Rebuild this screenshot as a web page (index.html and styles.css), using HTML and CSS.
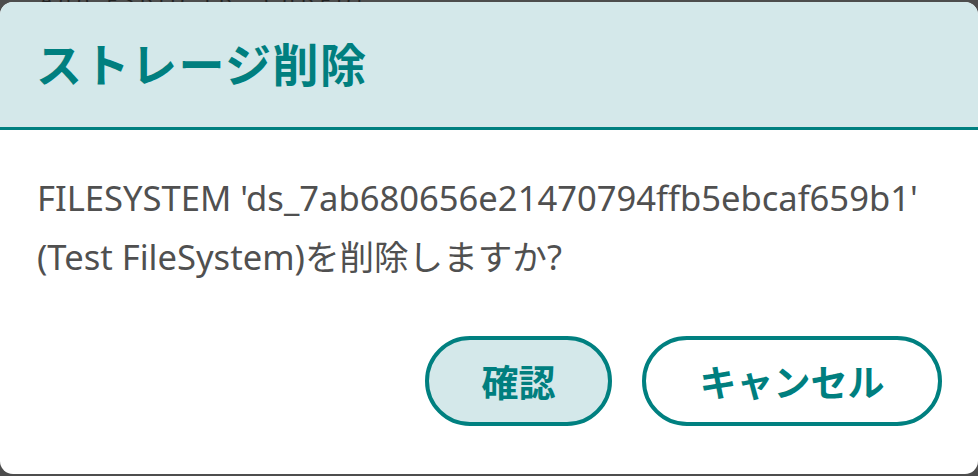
FILE: index.html
```html
<!DOCTYPE html>
<html lang="ja">
<head>
<meta charset="utf-8">
<link rel="stylesheet" href="styles.css">
</head>
<body>
<div class="backdrop-text">Ado FSBiD TB_ CdBFDi</div>
<div class="dialog">
  <div class="dialog-header">
    <h1 class="dialog-title">ストレージ削除</h1>
  </div>
  <div class="dialog-body">
    <p class="dialog-message">FILESYSTEM 'ds_7ab680656e21470794ffb5ebcaf659b1' (Test FileSystem)を削除しますか?</p>
  </div>
  <div class="dialog-actions">
    <button class="btn btn-primary">確認</button>
    <button class="btn btn-secondary">キャンセル</button>
  </div>
</div>
</body>
</html>
```
FILE: styles.css
```css
html, body {
  margin: 0;
  padding: 0;
  width: 978px;
  height: 476px;
  overflow: hidden;
  background: #4d4d4d;
}
body {
  position: relative;
  font-family: "Noto Sans", "Open Sans", "Noto Sans CJK JP", sans-serif;
}
.backdrop-text {
  position: absolute;
  top: -14px;
  left: 40px;
  font-size: 20px;
  color: #222;
  letter-spacing: 6px;
}
.dialog {
  position: relative;
  margin-top: 2px;
  width: 978px;
  height: 472px;
  background: #ffffff;
  border-radius: 13px;
  overflow: hidden;
  display: flex;
  flex-direction: column;
}
.dialog-header {
  background: #d4e8ea;
  border-bottom: 3px solid #008080;
  display: flex;
  align-items: center;
  padding-left: 36px;
  box-sizing: border-box;
  flex: none;
  height: 128px;
}
.dialog-title {
  margin: 0;
  font-family: "Noto Sans CJK JP", sans-serif;
  font-weight: 700;
  font-size: 46px;
  line-height: 1;
  color: #007f7f;
  letter-spacing: 1.5px;
  padding-bottom: 6px;
}
.dialog-body {
  padding: 38px 37px 0 37px;
  flex: 1;
}
.dialog-message {
  margin: 0;
  font-family: "Noto Sans", "Noto Sans CJK JP", sans-serif;
  font-size: 34.6px;
  line-height: 59px;
  color: #505050;
}
.dialog-actions {
  display: flex;
  justify-content: flex-end;
  gap: 30px;
  padding: 0 36px 48px 0;
}
.btn {
  height: 90px;
  border: 4px solid #008080;
  border-radius: 45px;
  font-family: "Noto Sans CJK JP", sans-serif;
  font-weight: 700;
  font-size: 37px;
  color: #007f7f;
  box-sizing: border-box;
  padding: 0;
}
.btn-primary {
  width: 187px;
  background: #d4e8ea;
}
.btn-secondary {
  width: 300px;
  background: #ffffff;
}
```
